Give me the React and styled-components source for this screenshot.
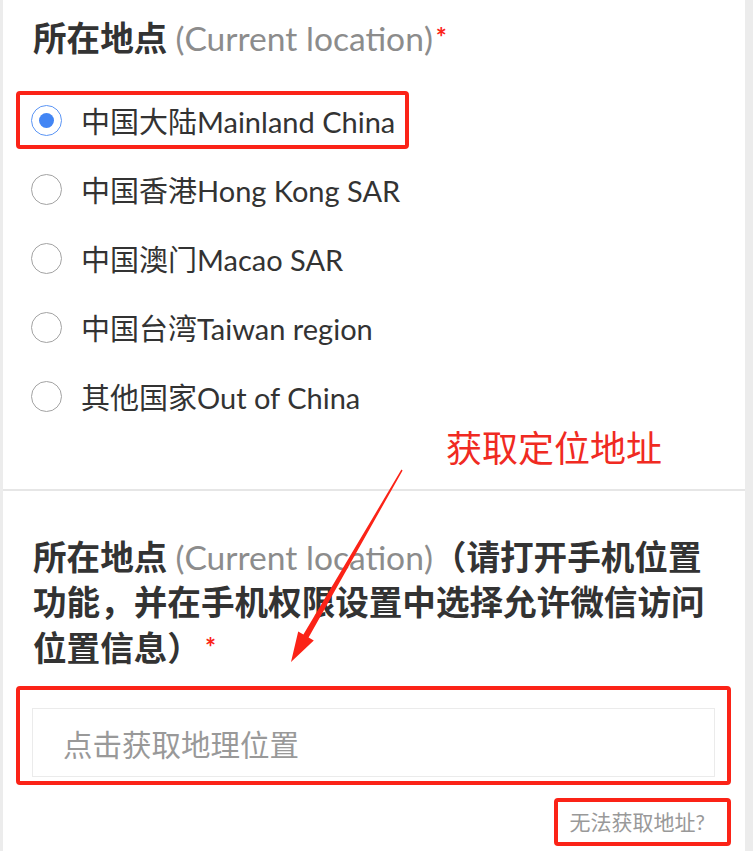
import React, { useState } from "react";
import styled, { createGlobalStyle } from "styled-components";

const GlobalStyle = createGlobalStyle`
  html, body {
    margin: 0;
    padding: 0;
    background: #ececec;
  }
  body {
    font-family: "Lato", "Noto Sans CJK SC", sans-serif;
    color: #333;
  }
`;

const RED = "#fb2317";

const regions = [
  { id: "cn", label: "中国大陆Mainland China" },
  { id: "hk", label: "中国香港Hong Kong SAR" },
  { id: "mo", label: "中国澳门Macao SAR" },
  { id: "tw", label: "中国台湾Taiwan region" },
  { id: "out", label: "其他国家Out of China" },
];

const Page = styled.div`
  position: relative;
  width: 742px;
  margin-left: 3px;
  min-height: 851px;
  background: #fff;
`;

const Section = styled.section`
  padding: ${(p) => p.$pad};
  border-bottom: ${(p) => (p.$divided ? "2px solid #e6e6e6" : "none")};
`;

const Title = styled.h2`
  margin: 0;
  padding: ${(p) => p.$pad || "0"};
  font-size: 33.6px;
  line-height: 45px;
  font-weight: 700;
  color: #333;
`;

const Hint = styled.span`
  font-weight: 400;
  color: #8c8c8c;
`;

const Star = styled.span`
  color: ${RED};
  font-weight: 700;
  font-size: 26px;
  margin-left: ${(p) => p.$gap || "3px"};
  vertical-align: 4px;
`;

const OptionList = styled.div`
  display: flex;
  flex-direction: column;
  align-items: flex-start;
  gap: 11px;
  margin-top: 30px;
`;

const Option = styled.label`
  display: inline-flex;
  align-items: center;
  gap: 19px;
  height: 50px;
  padding: 0 10px 0 11px;
  border: 4px solid ${(p) => (p.$marked ? RED : "transparent")};
  border-radius: 4px;
  font-size: 29px;
  color: #333;
  cursor: pointer;
`;

const Radio = styled.span`
  box-sizing: border-box;
  width: 31px;
  height: 31px;
  flex: none;
  border-radius: 50%;
  border: 1.4px solid ${(p) => (p.$on ? "#5b95f5" : "#a3a3a3")};
  display: flex;
  align-items: center;
  justify-content: center;

  &::after {
    content: "";
    width: 15px;
    height: 15px;
    border-radius: 50%;
    background: #4285f4;
    display: ${(p) => (p.$on ? "block" : "none")};
  }
`;

const Marked = styled.div`
  border: 4px solid ${RED};
  border-radius: 4px;
  padding: ${(p) => p.$pad};
`;

const LocateBox = styled.div`
  height: 67px;
  border: 1px solid #ebebeb;
  display: flex;
  align-items: center;
  padding-left: 30px;
  font-size: 29.5px;
  color: #999;
  cursor: pointer;
`;

const HelpRow = styled.div`
  display: flex;
  justify-content: flex-end;
  margin-top: 13px;
`;

const HelpLink = styled(Marked)`
  font-size: 21px;
  line-height: 40px;
  color: #999;
  cursor: pointer;
`;

const Note = styled.div`
  position: absolute;
  left: 443px;
  top: 424px;
  font-size: 36px;
  line-height: 48px;
  color: #f02a22;
`;

const Overlay = styled.svg`
  position: absolute;
  left: 0;
  top: 0;
  pointer-events: none;
`;

const App = () => {
  const [region, setRegion] = useState("cn");

  return (
    <>
      <GlobalStyle />
      <Page>
        <Section $pad="15px 0 64px 13px" $divided>
          <Title $pad="0 0 0 17px">
            所在地点 <Hint>(Current location)</Hint>
            <Star>*</Star>
          </Title>
          <OptionList>
            {regions.map((r) => (
              <Option key={r.id} $marked={r.id === "cn"} onClick={() => setRegion(r.id)}>
                <Radio $on={region === r.id} />
                {r.label}
              </Option>
            ))}
          </OptionList>
        </Section>

        <Section $pad="44px 14px 0 13px">
          <Title $pad="0 10px 0 17px">
            所在地点 <Hint>(Current location)</Hint>（请打开手机位置功能，并在手机权限设置中选择允许微信访问位置信息）
            <Star $gap="4px">*</Star>
          </Title>
          <Marked $pad="18px 12px 4px 12px" style={{ marginTop: 15 }}>
            <LocateBox>点击获取地理位置</LocateBox>
          </Marked>
          <HelpRow>
            <HelpLink $pad="0 22px 0 12px">无法获取地址?</HelpLink>
          </HelpRow>
        </Section>

        <Note>获取定位地址</Note>
        <Overlay width="742" height="851" viewBox="3 0 742 851">
          <polygon
            fill={RED}
            points="402.6,470.4 308.6,637.5 313.8,640.5 291,662 298.2,631.5 303.4,634.5 401.4,469.6"
          />
        </Overlay>
      </Page>
    </>
  );
};

export default App;
